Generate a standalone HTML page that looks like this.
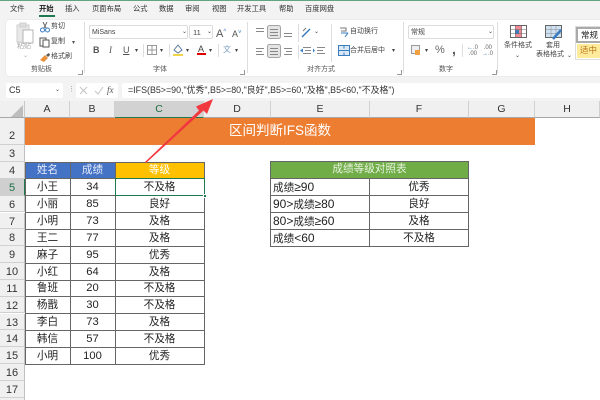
<!DOCTYPE html>
<html><head><meta charset="utf-8"><style>
html,body{margin:0;padding:0;background:#fff}
#p{position:relative;width:600px;height:400px;overflow:hidden;background:#fff;font-family:"Liberation Sans","Noto Sans CJK SC",sans-serif;color:#222;filter:blur(.3px)}
#p div{position:absolute;box-sizing:border-box;white-space:nowrap}
.t{font-size:7.3px;line-height:12px;top:3px;color:#333}
.r{font-size:7px;line-height:10px;color:#444}
.g{font-size:7px;line-height:10px;color:#555;top:65px}
.ch{top:101px;height:17px;background:#f0f0f0;border-right:1px solid #d0d0d0;border-bottom:1px solid #a8a8a8;text-align:center;font-size:10.5px;line-height:16px;color:#333}
.rh{left:0;width:25px;background:#f0f0f0;border-bottom:1px solid #d0d0d0;border-right:1px solid #c0c0c0;text-align:center;font-size:11px;line-height:18px;color:#333}
.c{font-size:10.6px;text-align:center;line-height:16.8px;height:16.8px;color:#222;margin-top:.6px}
.n{font-size:11.2px}
.m{font-size:12px}
.hl{height:1px;background:#666}
.vl{width:1px;background:#666}
.sp{background:#dedede;width:1px}
svg{position:absolute}
</style></head><body><div id="p">
<div style="left:0;top:0;width:600px;height:78px;background:#f3f3f3"></div>
<div style="left:0;top:0;width:600px;height:1px;background:#5fa57f"></div>
<div class="t" style="left:10px">文件</div>
<div class="t" style="left:39px;font-weight:bold;color:#222">开始</div>
<div style="left:39px;top:15px;width:16px;height:1.5px;background:#1f7a4d"></div>
<div class="t" style="left:65px">插入</div>
<div class="t" style="left:92px">页面布局</div>
<div class="t" style="left:133px">公式</div>
<div class="t" style="left:159px">数据</div>
<div class="t" style="left:185px">审阅</div>
<div class="t" style="left:212px">视图</div>
<div class="t" style="left:237px">开发工具</div>
<div class="t" style="left:279px">帮助</div>
<div class="t" style="left:305px">百度网盘</div>

<div style="left:5px;top:19px;width:600px;height:58px;background:#fff;border-radius:5px 0 0 5px;border:1px solid #ececec"></div>

<!-- clipboard -->
<svg style="left:16px;top:22px" width="20" height="24" viewBox="0 0 20 24"><rect x="1" y="3" width="12" height="17" fill="#e8e8e8" stroke="#cfcfcf"/><rect x="4" y="1" width="6" height="4" fill="#ddd" stroke="#cfcfcf"/><rect x="7" y="8" width="10" height="13" fill="#fff" stroke="#b4b4b4"/></svg>
<div class="r" style="left:17px;top:42px;color:#aaa">粘贴</div>
<div class="r" style="left:23px;top:51px;color:#aaa;font-size:6px">⌄</div>
<svg style="left:40px;top:22px" width="10" height="11" viewBox="0 0 10 11"><path d="M3 0L6 6M7 0L4 6" stroke="#666" fill="none"/><circle cx="2.500" cy="8" r="2" fill="none" stroke="#3a7cc0"/><circle cx="7.500" cy="8" r="2" fill="none" stroke="#3a7cc0"/></svg>
<div class="r" style="left:51px;top:22px">剪切</div>
<svg style="left:39px;top:37px" width="11" height="11" viewBox="0 0 11 11"><rect x="1" y="1" width="6" height="8" fill="#fff" stroke="#555"/><rect x="4" y="3" width="6" height="7" fill="#fff" stroke="#555"/></svg>
<div class="r" style="left:51px;top:37px">复制</div>
<div class="r" style="left:72px;top:38px;font-size:6px;color:#555">▾</div>
<svg style="left:39px;top:52px" width="12" height="11" viewBox="0 0 12 11"><path d="M1 8L6 3L9 6L5 10Z" fill="#e8913a"/><path d="M7 3L10 1L11 3L9 5Z" fill="#555"/></svg>
<div class="r" style="left:51px;top:52px">格式刷</div>
<div class="g" style="left:31px">剪贴板</div>
<div style="left:78px;top:70px;width:5px;height:5px;border:1px solid #999;border-width:0 1px 1px 0"></div>
<div class="sp" style="left:84px;top:22px;height:51px"></div>

<!-- font -->
<div style="left:89px;top:25px;width:99px;height:14px;border:1px solid #dcdcdc;border-radius:2px;font-size:7px;line-height:13px;padding-left:2px;color:#444">MiSans</div>
<div class="r" style="left:182px;top:27px;font-size:6px">⌄</div>
<div style="left:189px;top:25px;width:24px;height:14px;border:1px solid #dcdcdc;border-radius:2px;font-size:7.5px;line-height:13px;padding-left:3px;color:#444">11</div>
<div class="r" style="left:207px;top:27px;font-size:6px">⌄</div>
<div style="left:216px;top:25px;font-size:11px;line-height:14px;color:#555">A<span style="font-size:6px;vertical-align:4px;color:#3a7cc0">^</span></div>
<div style="left:232px;top:27px;font-size:9px;line-height:12px;color:#555">A<span style="font-size:6px;vertical-align:3px;color:#3a7cc0">˅</span></div>
<div style="left:93px;top:44px;font-size:9px;line-height:12px;font-weight:bold;color:#555">B</div>
<div style="left:109px;top:44px;font-size:9px;line-height:12px;font-style:italic;color:#555;font-family:'Liberation Serif',serif">I</div>
<div style="left:123px;top:44px;font-size:9px;line-height:12px;text-decoration:underline;color:#555">U</div>
<div class="r" style="left:135px;top:46px;font-size:6px">▾</div>
<div class="sp" style="left:143px;top:44px;height:13px"></div>
<svg style="left:147px;top:45px" width="10" height="10"><path d="M.5.5h9v9h-9zM5 .5v9M.5 5h9" fill="none" stroke="#999"/></svg>
<div class="r" style="left:160px;top:46px;font-size:6px">▾</div>
<div class="sp" style="left:169px;top:44px;height:13px"></div>
<svg style="left:173px;top:44px" width="10" height="13" viewBox="0 0 10 13"><path d="M5 1L9 6L5 9L1 6Z" fill="none" stroke="#5a7aa0"/><rect x="0" y="10" width="10" height="2" fill="#f1d44a"/></svg>
<div class="r" style="left:186px;top:46px;font-size:6px">▾</div>
<div style="left:198px;top:44px;font-size:9px;line-height:10px;color:#444">A</div>
<div style="left:197px;top:53px;width:9px;height:2px;background:#e00000"></div>
<div class="r" style="left:209px;top:46px;font-size:6px">▾</div>
<div class="sp" style="left:218px;top:44px;height:13px"></div>
<div style="left:223px;top:44px;font-size:8px;line-height:12px;color:#7a9ec4">文</div>
<div class="r" style="left:235px;top:46px;font-size:6px">▾</div>
<div class="g" style="left:153px">字体</div>
<div style="left:240px;top:70px;width:5px;height:5px;border:1px solid #999;border-width:0 1px 1px 0"></div>
<div class="sp" style="left:247px;top:22px;height:51px"></div>

<!-- alignment -->
<svg style="left:254px;top:25px" width="90" height="44" viewBox="0 0 90 44" fill="none" stroke="#888">
<rect x="13.500" y="0.500" width="13" height="13" rx="2" fill="#e4e4e4" stroke="#a4a4a4"/>
<rect x="13.500" y="19.500" width="13" height="13" rx="2" fill="#e4e4e4" stroke="#a4a4a4"/>
<path d="M2 3.500h8M2 6.500h8M16 4.500h8M16 7.500h8M16 10.500h8M30 8.500h8M30 11.500h8M2 23.500h8M2 26.500h6M2 29.500h8M16 23.500h8M16 26.500h8M16 29.500h8M30 23.500h8M32 26.500h6M30 29.500h8M49 22.500h8M51 25.500h6M49 28.500h8M63 22.500h8M63 25.500h6M63 28.500h8"/>
<path d="M46 25.500l3-2v4zM61 25.500l-2-2v4z" fill="#3a7cc0" stroke="none"/></svg>
<div class="sp" style="left:298px;top:24px;height:18px"></div>
<div class="sp" style="left:298px;top:45px;height:14px"></div>
<svg style="left:301px;top:27px" width="12" height="11" viewBox="0 0 12 11"><path d="M1 10L9 2" stroke="#3a7cc0" stroke-width="1.500"/><path d="M2 4l3-3" stroke="#777"/></svg>
<div class="r" style="left:314px;top:27px;font-size:6px">⌄</div>
<div class="sp" style="left:331px;top:24px;height:38px"></div>
<svg style="left:339px;top:26px" width="11" height="13" viewBox="0 0 11 13"><path d="M1 2h6v3H2" fill="none" stroke="#777"/><path d="M2 7h7M6 11l3-4" fill="none" stroke="#3a7cc0"/></svg>
<div class="r" style="left:350px;top:27px">自动换行</div>
<svg style="left:338px;top:45px" width="12" height="11"><rect x=".5" y=".5" width="11" height="10" fill="#dbe9f6" stroke="#3a7cc0"/><path d="M.5 5.500h11M6 .5v3M6 7.500v3" stroke="#3a7cc0"/></svg>
<div class="r" style="left:350px;top:46px">合并后居中</div>
<div class="r" style="left:392px;top:46px;font-size:6px">▾</div>
<div class="g" style="left:307px">对齐方式</div>
<div style="left:397px;top:70px;width:5px;height:5px;border:1px solid #999;border-width:0 1px 1px 0"></div>
<div class="sp" style="left:403px;top:22px;height:51px"></div>

<!-- number -->
<div style="left:408px;top:25px;width:86px;height:14px;border:1px solid #dcdcdc;border-radius:2px;font-size:7px;line-height:13px;padding-left:2px;color:#444">常规</div>
<div class="r" style="left:488px;top:27px;font-size:6px">⌄</div>
<svg style="left:411px;top:45px" width="10" height="11"><rect x=".5" y=".5" width="8" height="8" fill="#eee" stroke="#999"/><rect x="4" y="5" width="5" height="5" fill="#f0a040"/></svg>
<div class="r" style="left:425px;top:46px;font-size:6px">▾</div>
<div style="left:435px;top:44px;font-size:11px;line-height:12px;color:#666">%</div>
<div style="left:452px;top:42px;font-size:14px;line-height:14px;font-weight:bold;color:#555">,</div>
<div class="sp" style="left:462px;top:44px;height:13px"></div>
<div style="left:467px;top:45px;font-size:6px;line-height:6px;color:#666"><span style="color:#3a7cc0">←</span>.0<br>&nbsp;.00</div>
<div style="left:482px;top:45px;font-size:6px;line-height:6px;color:#666">&nbsp;.00<br><span style="color:#3a7cc0">→</span>.0</div>
<div class="g" style="left:439px">数字</div>
<div style="left:492px;top:70px;width:5px;height:5px;border:1px solid #999;border-width:0 1px 1px 0"></div>
<div class="sp" style="left:497px;top:22px;height:51px"></div>

<!-- styles -->
<svg style="left:510px;top:25px" width="17" height="13"><rect x=".5" y=".5" width="16" height="12" fill="#fff" stroke="#666"/><rect x="5" y="1" width="7" height="11" fill="#f08a94"/><rect x="5" y="5" width="4" height="4" fill="#3a7cc0"/><path d="M5.500 1v11M11.500 1v11M1 4.500h15M1 8.500h15" stroke="#666" stroke-width=".5"/></svg>
<div class="r" style="left:504px;top:41px">条件格式</div>
<div class="r" style="left:515px;top:51px;font-size:6px">⌄</div>
<svg style="left:545px;top:25px" width="18" height="16"><rect x=".5" y=".5" width="16" height="12" fill="#cfe2f3" stroke="#666"/><path d="M1 4.500h15M1 8.500h15M6 1v11M11 1v11" stroke="#888" stroke-width=".5"/><path d="M8 14L16 5" stroke="#3a7cc0" stroke-width="2.500"/></svg>
<div class="r" style="left:546px;top:41px">套用</div>
<div class="r" style="left:536px;top:50px">表格格式</div>
<div class="r" style="left:567px;top:51px;font-size:6px">⌄</div>
<div style="left:575px;top:26px;width:25px;height:34px;background:#fff;border:1px solid #ddd;border-right:0"></div>
<div style="left:576px;top:27px;width:24px;height:16px;background:#fff;border:2px solid #aaa;border-right:0;font-size:8.5px;line-height:12px;padding-left:3px">常规</div>
<div style="left:577px;top:44px;width:23px;height:14px;background:#ffeb9c;font-size:8.5px;line-height:13px;padding-left:3px;color:#b9761a">适中</div>

<!-- formula bar -->
<div style="left:0;top:78px;width:600px;height:23px;background:#f3f3f3"></div>
<div style="left:6px;top:83px;width:57px;height:15px;background:#fff;border-radius:2px;font-size:9px;line-height:15px;padding-left:3px;color:#333">C5</div>
<div class="r" style="left:55px;top:85px;font-size:6px">⌄</div>
<div class="r" style="left:68px;top:85px;color:#999">⋮</div>
<div style="left:76px;top:83px;width:42px;height:15px;background:#fff;border-radius:2px"></div>
<svg style="left:79px;top:85px" width="26" height="11" fill="none" stroke="#c4c4c4"><path d="M1 2l7 7M8 2l-7 7M16 6l3 3l5-7"/></svg>
<div style="left:107px;top:84px;font-family:'Liberation Serif',serif;font-style:italic;font-size:9px;line-height:13px;color:#555">fx</div>
<div style="left:122px;top:83px;width:478px;height:15px;background:#fff;border-radius:2px 0 0 2px;font-size:8.9px;line-height:14px;padding-left:6px;color:#333">=IFS(B5&gt;=90,"优秀",B5&gt;=80,"良好",B5&gt;=60,"及格",B5&lt;60,"不及格")</div>

<!-- headers -->
<div style="left:0;top:101px;width:25px;height:17px;background:#f0f0f0;border-right:1px solid #c8c8c8;border-bottom:1px solid #a8a8a8"></div>
<svg style="left:11px;top:105px" width="12" height="12"><path d="M12 0V12H0Z" fill="#bdbdbd"/></svg>
<div class="ch" style="left:25px;width:45px">A</div>
<div class="ch" style="left:70px;width:45px">B</div>
<div class="ch" style="left:115px;width:89px;background:#d2d2d2;color:#1f6e43;border-bottom:1px solid #1f7a4d">C</div>
<div class="ch" style="left:204px;width:67px">D</div>
<div class="ch" style="left:271px;width:99px">E</div>
<div class="ch" style="left:370px;width:99px">F</div>
<div class="ch" style="left:469px;width:66px">G</div>
<div class="ch" style="left:535px;width:65px">H</div>

<div class="rh" style="top:118px;height:27px;line-height:37px">2</div>
<div class="rh" style="top:145px;height:17px">3</div>
<div class="rh" style="top:162px;height:16.800px">4</div>
<div class="rh" style="top:178.800px;height:16.800px;background:#cfcfcf;color:#1f6e43;border-right:1px solid #1f7a4d">5</div>
<div class="rh" style="top:195.700px;height:16.800px">6</div>
<div class="rh" style="top:212.500px;height:16.800px">7</div>
<div class="rh" style="top:229.300px;height:16.800px">8</div>
<div class="rh" style="top:246.200px;height:16.800px">9</div>
<div class="rh" style="top:263px;height:16.800px">10</div>
<div class="rh" style="top:279.800px;height:16.800px">11</div>
<div class="rh" style="top:296.700px;height:16.800px">12</div>
<div class="rh" style="top:313.500px;height:16.800px">13</div>
<div class="rh" style="top:330.300px;height:16.800px">14</div>
<div class="rh" style="top:347.200px;height:16.800px">15</div>
<div class="rh" style="top:364px;height:17px">16</div>
<div class="rh" style="top:381px;height:17px">17</div>
<div class="rh" style="top:398px;height:17px"></div>

<!-- title -->
<div style="left:25px;top:118px;width:510px;height:27px;background:#ed7d31;color:#fff;text-align:center;font-size:13.5px;line-height:26px">区间判断IFS函数</div>

<!-- left table -->
<div style="left:25px;top:162px;width:45px;height:17px;background:#4472c4;color:#e8eefa;text-align:center;font-size:10.6px;line-height:17px">姓名</div>
<div style="left:70px;top:162px;width:45px;height:17px;background:#4472c4;color:#e8eefa;text-align:center;font-size:10.6px;line-height:17px">成绩</div>
<div style="left:115px;top:162px;width:89px;height:17px;background:#ffc000;color:#fff;text-align:center;font-size:10.6px;line-height:17px">等级</div>

<div class="c" style="left:25px;width:45px;top:178.800px">小王</div><div class="c n" style="left:70px;width:45px;top:178.800px">34</div><div class="c" style="left:115px;width:89px;top:178.800px">不及格</div>
<div class="c" style="left:25px;width:45px;top:195.700px">小丽</div><div class="c n" style="left:70px;width:45px;top:195.700px">85</div><div class="c" style="left:115px;width:89px;top:195.700px">良好</div>
<div class="c" style="left:25px;width:45px;top:212.500px">小明</div><div class="c n" style="left:70px;width:45px;top:212.500px">73</div><div class="c" style="left:115px;width:89px;top:212.500px">及格</div>
<div class="c" style="left:25px;width:45px;top:229.300px">王二</div><div class="c n" style="left:70px;width:45px;top:229.300px">77</div><div class="c" style="left:115px;width:89px;top:229.300px">及格</div>
<div class="c" style="left:25px;width:45px;top:246.200px">麻子</div><div class="c n" style="left:70px;width:45px;top:246.200px">95</div><div class="c" style="left:115px;width:89px;top:246.200px">优秀</div>
<div class="c" style="left:25px;width:45px;top:263px">小红</div><div class="c n" style="left:70px;width:45px;top:263px">64</div><div class="c" style="left:115px;width:89px;top:263px">及格</div>
<div class="c" style="left:25px;width:45px;top:279.800px">鲁班</div><div class="c n" style="left:70px;width:45px;top:279.800px">20</div><div class="c" style="left:115px;width:89px;top:279.800px">不及格</div>
<div class="c" style="left:25px;width:45px;top:296.700px">杨戬</div><div class="c n" style="left:70px;width:45px;top:296.700px">30</div><div class="c" style="left:115px;width:89px;top:296.700px">不及格</div>
<div class="c" style="left:25px;width:45px;top:313.500px">李白</div><div class="c n" style="left:70px;width:45px;top:313.500px">73</div><div class="c" style="left:115px;width:89px;top:313.500px">及格</div>
<div class="c" style="left:25px;width:45px;top:330.300px">韩信</div><div class="c n" style="left:70px;width:45px;top:330.300px">57</div><div class="c" style="left:115px;width:89px;top:330.300px">不及格</div>
<div class="c" style="left:25px;width:45px;top:347.200px">小明</div><div class="c n" style="left:70px;width:45px;top:347.200px">100</div><div class="c" style="left:115px;width:89px;top:347.200px">优秀</div>

<div class="hl" style="left:25px;width:179px;top:162px"></div>
<div class="hl" style="left:25px;width:179px;top:178px"></div>
<div class="hl" style="left:25px;width:179px;top:195px"></div>
<div class="hl" style="left:25px;width:179px;top:212px"></div>
<div class="hl" style="left:25px;width:179px;top:229px"></div>
<div class="hl" style="left:25px;width:179px;top:246px"></div>
<div class="hl" style="left:25px;width:179px;top:263px"></div>
<div class="hl" style="left:25px;width:179px;top:280px"></div>
<div class="hl" style="left:25px;width:179px;top:296px"></div>
<div class="hl" style="left:25px;width:179px;top:313px"></div>
<div class="hl" style="left:25px;width:179px;top:330px"></div>
<div class="hl" style="left:25px;width:179px;top:347px"></div>
<div class="hl" style="left:25px;width:179px;top:364px"></div>
<div class="vl" style="left:25px;top:162px;height:202px"></div>
<div class="vl" style="left:70px;top:162px;height:202px"></div>
<div class="vl" style="left:115px;top:162px;height:202px"></div>
<div class="vl" style="left:204px;top:162px;height:203px"></div>
<div style="left:115px;top:178px;width:90px;height:18px;border:1.500px solid #1f7a4d"></div>
<div style="left:203px;top:194px;width:4px;height:4px;background:#1f7a4d;border:1px solid #fff"></div>

<!-- right table -->
<div style="left:270px;top:161px;width:199px;height:17px;background:#70ad47;color:#eaf4e2;text-align:center;font-size:10.6px;line-height:17px">成绩等级对照表</div>
<div class="c" style="left:273px;width:96px;top:178.800px;text-align:left">成绩<span class="m">≥90</span></div><div class="c" style="left:370px;width:98px;top:178.800px">优秀</div>
<div class="c" style="left:273px;width:96px;top:195.800px;text-align:left"><span class="m">90&gt;</span>成绩<span class="m">≥80</span></div><div class="c" style="left:370px;width:98px;top:195.800px">良好</div>
<div class="c" style="left:273px;width:96px;top:212.800px;text-align:left"><span class="m">80&gt;</span>成绩<span class="m">≥60</span></div><div class="c" style="left:370px;width:98px;top:212.800px">及格</div>
<div class="c" style="left:273px;width:96px;top:229.800px;text-align:left">成绩<span class="m">&lt;60</span></div><div class="c" style="left:370px;width:98px;top:229.800px">不及格</div>
<div class="hl" style="left:270px;width:199px;top:161px"></div>
<div class="hl" style="left:270px;width:199px;top:178px"></div>
<div class="hl" style="left:270px;width:199px;top:195px"></div>
<div class="hl" style="left:270px;width:199px;top:212px"></div>
<div class="hl" style="left:270px;width:199px;top:229px"></div>
<div class="hl" style="left:270px;width:199px;top:246px"></div>
<div class="vl" style="left:270px;top:161px;height:85px"></div>
<div class="vl" style="left:369px;top:178px;height:68px"></div>
<div class="vl" style="left:468px;top:161px;height:86px"></div>

<!-- arrow -->
<svg style="left:0;top:0" width="600" height="400"><path d="M145 162L199 110.500L196 106.500L213 99L207 114L203.500 110.500L146 163Z" fill="#f2383f"/></svg>
</div></body></html>
